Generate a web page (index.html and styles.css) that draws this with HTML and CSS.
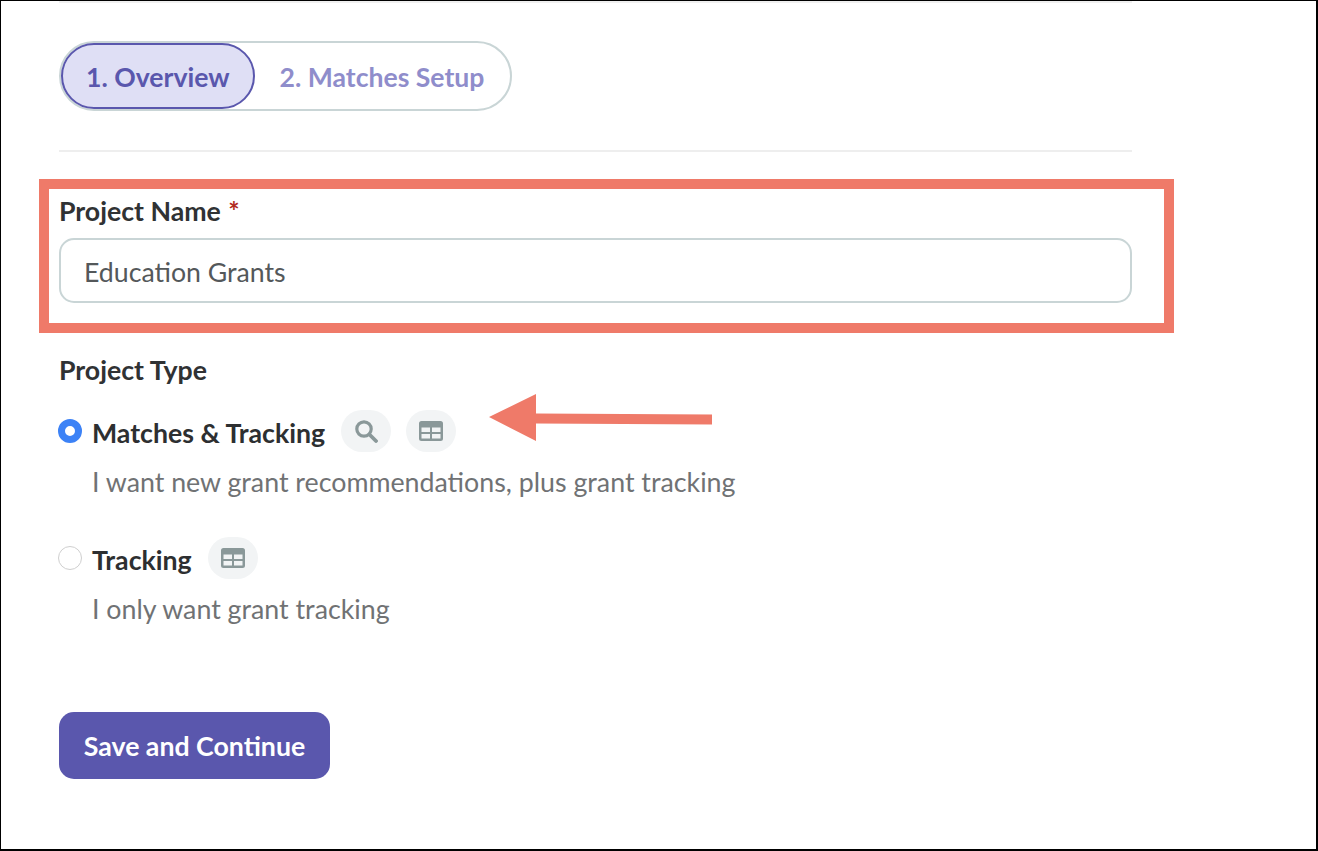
FILE: index.html
```html
<!DOCTYPE html>
<html lang="en">
<head>
  <meta charset="UTF-8">
  <title>Project Setup</title>
  <link rel="stylesheet" href="styles.css">
</head>
<body>

<div class="page">
  <div class="content">
    <div class="steps">
      <div class="step active">1. Overview</div>
      <div class="step">2. Matches Setup</div>
    </div>
    <hr class="divider">

    <div class="field">
      <label class="field-label">Project Name <span class="required">*</span></label>
      <input class="text-input" type="text" value="Education Grants">
    </div>

    <div class="field-label type-label">Project Type</div>

    <div class="option first">
      <div class="option-head">
        <span class="radio checked"></span>
        <span class="option-name">Matches &amp; Tracking</span>
        <span class="pill">
          <svg width="24" height="24" viewBox="0 0 24 24"><circle cx="10" cy="10" r="7.200" fill="none" stroke="#8a9899" stroke-width="3.200"/><path d="M15.500 15.500L22 22" stroke="#8a9899" stroke-width="3.800" stroke-linecap="round"/></svg>
        </span>
        <span class="pill">
          <svg width="24" height="20" viewBox="0 0 24 20"><path fill="#8a9899" fill-rule="evenodd" d="M2.500 0h19A2.500 2.500 0 0 1 24 2.500v15a2.500 2.500 0 0 1-2.500 2.500h-19A2.500 2.500 0 0 1 0 17.500v-15A2.500 2.500 0 0 1 2.500 0zM2.500 6.500v4.500h8.500V6.500zM13 6.500v4.500h8.500V6.500zM2.500 13v4.500h8.500V13zM13 13v4.500h8.500V13z"/></svg>
        </span>
      </div>
      <div class="option-desc">I want new grant recommendations, plus grant tracking</div>
    </div>

    <div class="option">
      <div class="option-head">
        <span class="radio"></span>
        <span class="option-name">Tracking</span>
        <span class="pill">
          <svg width="24" height="20" viewBox="0 0 24 20"><path fill="#8a9899" fill-rule="evenodd" d="M2.500 0h19A2.500 2.500 0 0 1 24 2.500v15a2.500 2.500 0 0 1-2.500 2.500h-19A2.500 2.500 0 0 1 0 17.500v-15A2.500 2.500 0 0 1 2.500 0zM2.500 6.500v4.500h8.500V6.500zM13 6.500v4.500h8.500V6.500zM2.500 13v4.500h8.500V13zM13 13v4.500h8.500V13z"/></svg>
        </span>
      </div>
      <div class="option-desc">I only want grant tracking</div>
    </div>

    <button class="save-btn">Save and Continue</button>
  </div>

  <!-- annotations on top of the screenshot -->
  <div class="callout-box"></div>
  <svg class="callout-arrow" width="226" height="50" viewBox="0 0 226 50">
    <path fill="#ef7a69" d="M0 24L47 1v19.500l176 1v10L47 30.500V48z"/>
  </svg>
</div>

</body>
</html>
```

FILE: styles.css
```css
* {
  box-sizing: border-box;
}
body {
  margin: 0;
  font-family: Lato, "Open Sans", sans-serif;
  font-variant-ligatures: common-ligatures;
  background: #fff;
}
.page {
  position: relative;
  width: 1318px;
  height: 851px;
  border: 1px solid #000;
  border-width: 1px 2px 2px 1px;
  overflow: hidden;
}
.content {
  width: 1073px;
  margin-left: 58px;
  border-top: 2px solid #f0f0f0;
  padding-top: 38px;
}
.steps {
  display: inline-flex;
  height: 70px;
  border: 2px solid #c9d5d6;
  border-radius: 35px;
  vertical-align: top;
}
.step {
  display: flex;
  align-items: center;
  height: 66px;
  padding: 2px 26px 0 25px;
  border-radius: 33px;
  font-size: 26.600px;
  font-weight: 700;
  color: #8f8dcb;
}
.step.active {
  border: 2px solid #5a57ad;
  background: #dfdff5;
  color: #5a57ad;
  padding: 2px 23px 0;
}
.divider {
  height: 2px;
  margin: 39px 0 0;
  border: 0;
  background: #eeeeee;
}
.field {
  margin-top: 43px;
}
.field-label {
  display: block;
  font-size: 26.700px;
  line-height: 32px;
  font-weight: 700;
  color: #303234;
}
.required {
  margin-left: 1px;
  color: #b22a1e;
}
.text-input {
  display: block;
  width: 100%;
  height: 65px;
  margin-top: 11px;
  padding: 3px 23px 0;
  border: 2px solid #c9d5d6;
  border-radius: 15px;
  background: #fff;
  font-family: inherit;
  font-variant-ligatures: common-ligatures;
  font-size: 26.700px;
  color: #54585a;
  outline: none;
}
.type-label {
  margin-top: 51px;
}
.option {
  margin-top: 31px;
}
.option.first {
  margin-top: 20px;
}
.option-head {
  display: flex;
  align-items: center;
  height: 50px;
}
.radio {
  width: 24px;
  height: 24px;
  margin-left: -1px;
  margin-right: 10px;
  border: 1px solid #cfcfcf;
  border-radius: 50%;
  background: #fff;
}
.radio.checked {
  border: 7.500px solid #3c82f6;
}
.option-name {
  padding-top: 3px;
  font-size: 26.700px;
  font-weight: 700;
  color: #2d2f31;
  margin-right: 16px;
}
.pill {
  display: flex;
  align-items: center;
  justify-content: center;
  width: 50px;
  height: 42px;
  margin-right: 15px;
  border-radius: 21px;
  background: #f2f4f5;
}
.option-desc {
  margin-top: 6px;
  padding-left: 33px;
  font-size: 26.780px;
  line-height: 40px;
  color: #707274;
}
.save-btn {
  display: block;
  width: 271px;
  height: 67px;
  margin-top: 83px;
  border: 0;
  border-radius: 15px;
  background: #5a57ad;
  font-family: inherit;
  font-variant-ligatures: common-ligatures;
  font-size: 26.700px;
  font-weight: 700;
  color: #fff;
}
.callout-box {
  position: absolute;
  left: 38px;
  top: 178px;
  width: 1135px;
  height: 154px;
  border: 10px solid #ef7a69;
}
.callout-arrow {
  position: absolute;
  left: 488px;
  top: 392px;
}
```
